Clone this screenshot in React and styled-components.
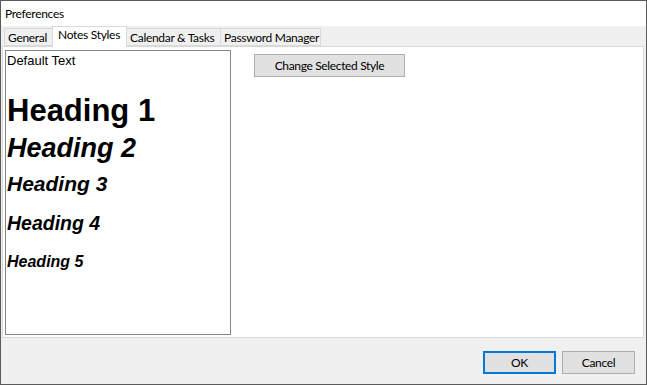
import React from "react";
import styled, { createGlobalStyle } from "styled-components";

const GlobalStyle = createGlobalStyle`
  html, body {
    margin: 0;
    padding: 0;
    background: #ffffff;
  }
  * {
    box-sizing: border-box;
  }
`;

const UI_FONT = `Lato, "Liberation Sans", sans-serif`;
const STYLE_FONT = `"Liberation Sans", Arial, sans-serif`;

const S = {
  Window: styled.div`
    width: 647px;
    height: 385px;
    border: 1px solid #5a5a5a;
    background: #f0f0f0;
    display: flex;
    flex-direction: column;
    font-family: ${UI_FONT};
    font-size: 12px;
    letter-spacing: -0.3px;
    color: #000;
  `,
  TitleBar: styled.div`
    height: 25px;
    line-height: 25px;
    background: #ffffff;
    padding-left: 4px;
  `,
  Body: styled.div`
    flex: 1;
    display: flex;
    flex-direction: column;
    padding: 0 2px 0 1px;
  `,
  TabRow: styled.div`
    height: 20px;
    display: flex;
    align-items: flex-end;
    padding-left: 2px;
    position: relative;
    z-index: 1;
  `,
  Tab: styled.div`
    width: ${(p) => p.$w}px;
    height: ${(p) => (p.$active ? 21 : 18)}px;
    margin-bottom: ${(p) => (p.$active ? -1 : 0)}px;
    margin-left: -1px;
    border: 1px solid #d9d9d9;
    border-bottom: ${(p) => (p.$active ? "none" : "1px solid #d9d9d9")};
    background: ${(p) => (p.$active ? "#ffffff" : "#f0f0f0")};
    padding-left: ${(p) => (p.$active ? 5 : 3)}px;
    line-height: ${(p) => (p.$active ? 16 : 17)}px;
    white-space: nowrap;
    &:first-child {
      margin-left: 0;
    }
  `,
  Page: styled.div`
    height: 292px;
    border: 1px solid #d9d9d9;
    background: #ffffff;
    padding: 3px 2px 2px 2px;
    display: flex;
    align-items: flex-start;
  `,
  StyleList: styled.div`
    width: 226px;
    height: 285px;
    border: 1px solid #828790;
    background: #ffffff;
    padding-left: 1px;
    font-family: ${STYLE_FONT};
    letter-spacing: 0;
  `,
  StyleItem: styled.div`
    font-size: ${(p) => p.$size}px;
    line-height: ${(p) => p.$line}px;
    margin-top: ${(p) => p.$gap || 0}px;
    font-weight: ${(p) => (p.$bold ? 700 : 400)};
    font-style: ${(p) => (p.$italic ? "italic" : "normal")};
    white-space: nowrap;
  `,
  Button: styled.button`
    height: 23px;
    width: ${(p) => p.$w}px;
    background: #e1e1e1;
    border: ${(p) => (p.$default ? "2px solid #0078d7" : "1px solid #adadad")};
    font-family: ${UI_FONT};
    font-size: 12px;
    letter-spacing: -0.35px;
    color: #000;
    padding: 0;
    margin: 0;
  `,
  SideButton: styled.div`
    margin: 4px 0 0 23px;
  `,
  Footer: styled.div`
    height: 46px;
    display: flex;
    justify-content: flex-end;
    align-items: flex-start;
    gap: 6px;
    padding: 13px 9px 0 0;
  `,
};

const tabs = [
  { label: "General", w: 49 },
  { label: "Notes Styles", w: 75, active: true },
  { label: "Calendar & Tasks", w: 95 },
  { label: "Password Manager", w: 101 },
];

const styles = [
  { label: "Default Text", size: 13, line: 19 },
  { label: "Heading 1", size: 31, line: 40, gap: 21, bold: true },
  { label: "Heading 2", size: 27, line: 34, bold: true, italic: true },
  { label: "Heading 3", size: 21, line: 30, gap: 4, bold: true, italic: true },
  { label: "Heading 4", size: 19.5, line: 30, gap: 9, bold: true, italic: true },
  { label: "Heading 5", size: 16, line: 24, gap: 12, bold: true, italic: true },
];

const App = () => {
  return (
    <>
      <GlobalStyle />
      <S.Window>
        <S.TitleBar>Preferences</S.TitleBar>
        <S.Body>
          <S.TabRow>
            {tabs.map((t) => (
              <S.Tab key={t.label} $w={t.w} $active={t.active}>
                {t.label}
              </S.Tab>
            ))}
          </S.TabRow>
          <S.Page>
            <S.StyleList>
              {styles.map((s) => (
                <S.StyleItem
                  key={s.label}
                  $size={s.size}
                  $line={s.line}
                  $gap={s.gap}
                  $bold={s.bold}
                  $italic={s.italic}
                >
                  {s.label}
                </S.StyleItem>
              ))}
            </S.StyleList>
            <S.SideButton>
              <S.Button $w={151}>Change Selected Style</S.Button>
            </S.SideButton>
          </S.Page>
          <S.Footer>
            <S.Button $w={73} $default>
              OK
            </S.Button>
            <S.Button $w={73}>Cancel</S.Button>
          </S.Footer>
        </S.Body>
      </S.Window>
    </>
  );
};

export default App;
